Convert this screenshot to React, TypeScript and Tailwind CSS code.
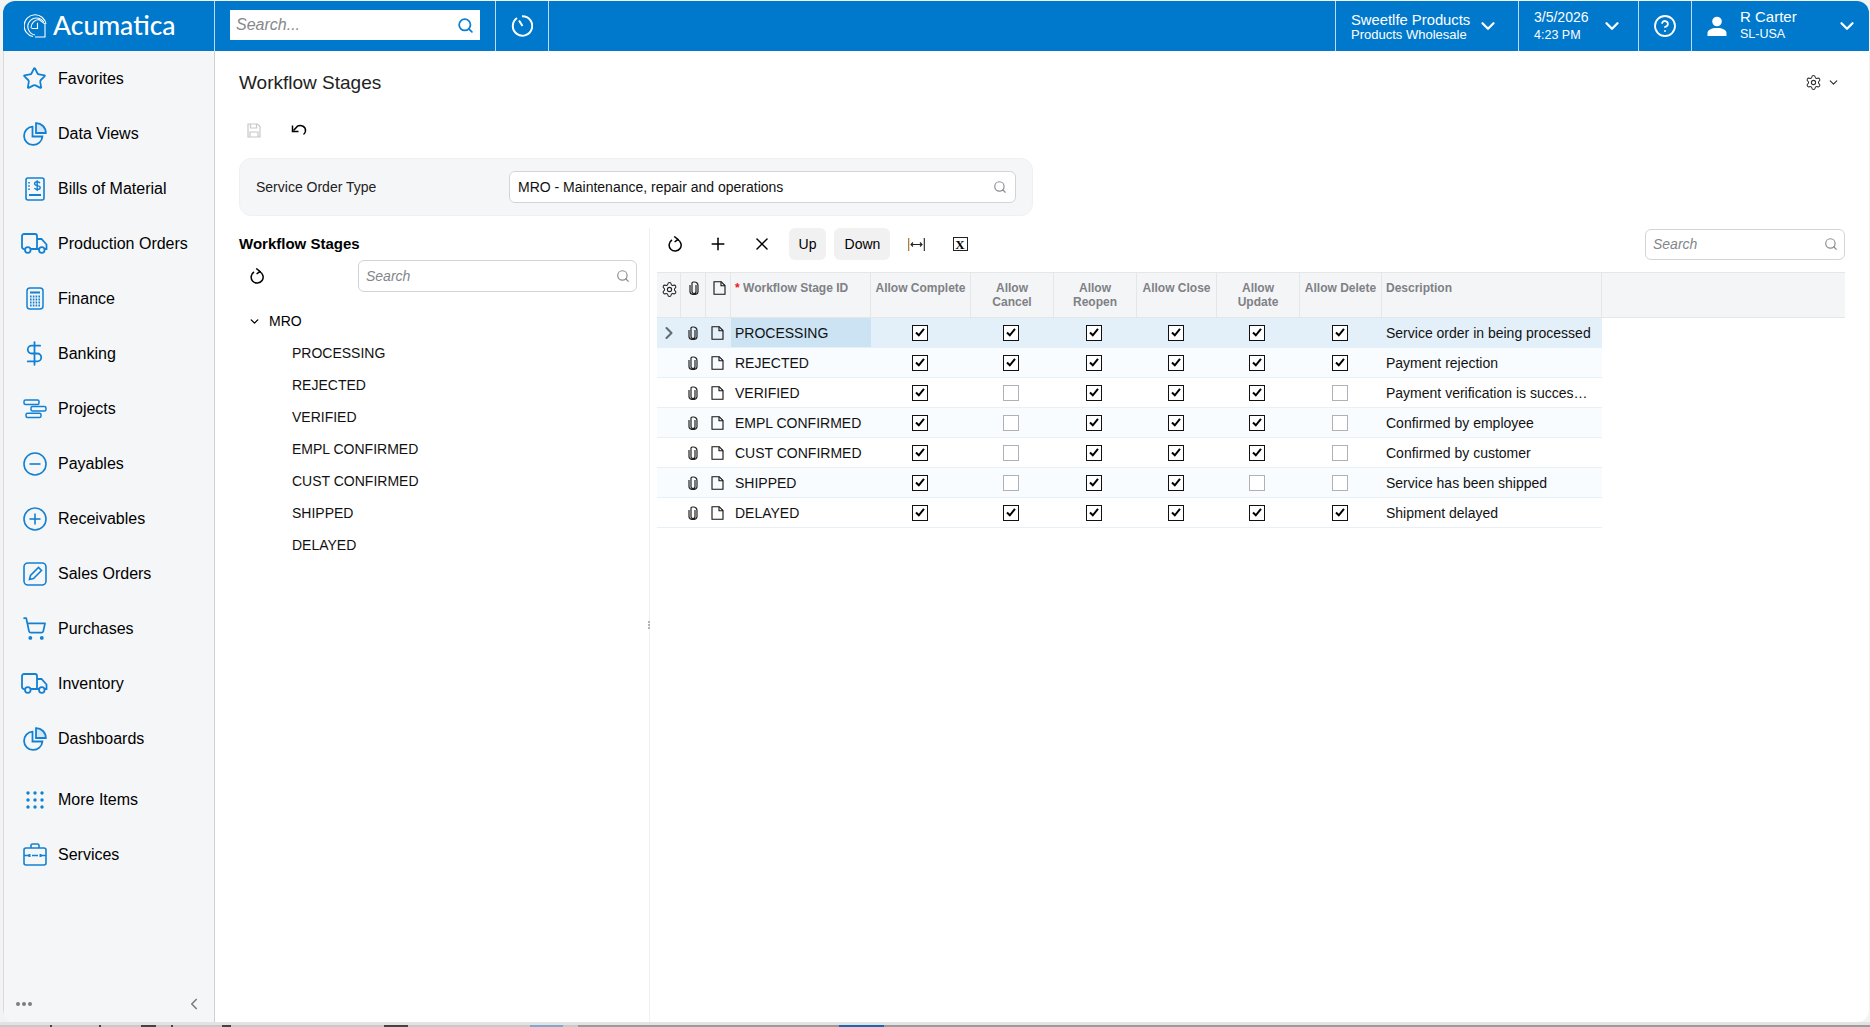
import { ChevronDown, ChevronLeft, ChevronRight, CircleHelp, Search, Settings, Star, DollarSign, ShoppingCart, Plus, X } from "lucide-react";
import type { ReactNode } from "react";

const font = { fontFamily: '"Liberation Sans", Arial, sans-serif' };

function PieIcon() {
  return (
    <svg width="24" height="24" viewBox="0 0 24 24" fill="none" stroke="currentColor" strokeWidth="1.8">
      <path d="M9.5 4.6A9.2 9.2 0 1 0 19.4 14.5H9.5Z" />
      <path d="M13 1.2A9.6 9.6 0 0 1 22.8 11H13Z" fill="#d3e6f6" />
    </svg>
  );
}

function BillIcon() {
  return (
    <svg width="20" height="24" viewBox="0 0 20 24" fill="none" stroke="currentColor" strokeWidth="1.6">
      <rect x="1" y="1" width="18" height="22" rx="2" />
      <path d="M4 5v9" strokeDasharray="1.5 1.8" />
      <path d="M15 6.2c-.6-1-1.6-1.4-2.8-1.4-1.5 0-2.6.7-2.6 1.9 0 2.6 5.6 1.2 5.6 3.9 0 1.2-1.2 1.9-2.8 1.9-1.3 0-2.4-.5-3-1.5M12.2 3.3v10.8" strokeWidth="1.4" />
      <path d="M4 18h12" strokeWidth="2" />
    </svg>
  );
}

function TruckIcon() {
  return (
    <svg width="27" height="21" viewBox="0 0 27 21" fill="none" stroke="currentColor" strokeWidth="1.8">
      <path d="M3.5 16H3a2 2 0 0 1-2-2V3a2 2 0 0 1 2-2h11a2 2 0 0 1 2 2v13H10" />
      <path d="M16 6h4.5l5 5.5V16h-2" />
      <path d="M16 16h2" />
      <circle cx="6.8" cy="17" r="2.8" />
      <circle cx="20.8" cy="17" r="2.8" />
    </svg>
  );
}

function CalcIcon() {
  return (
    <svg width="18" height="23" viewBox="0 0 18 23" fill="none" stroke="currentColor" strokeWidth="1.5">
      <rect x="1" y="1" width="16" height="21" rx="3" />
      <path d="M4 5.5h10" strokeWidth="2" />
      <path d="M4 9.5h10M4 12.5h10M4 15.5h10M4 18.5h10" strokeWidth="1.8" strokeDasharray="1.6 1.2" />
    </svg>
  );
}

function ProjectIcon() {
  return (
    <svg width="24" height="20" viewBox="0 0 24 20" fill="none" stroke="currentColor" strokeWidth="1.5">
      <rect x="1" y="1" width="15" height="4.4" rx="1.5" />
      <rect x="8" y="7.6" width="15" height="4.4" rx="1.5" />
      <rect x="3" y="14.2" width="15" height="4.4" rx="1.5" />
    </svg>
  );
}

function CircleSign({ plus }: { plus?: boolean }) {
  return (
    <svg width="24" height="24" viewBox="0 0 24 24" fill="none" stroke="currentColor" strokeWidth="1.6">
      <circle cx="12" cy="12" r="11" />
      <path d="M6.5 12h11" />
      {plus && <path d="M12 6.5v11" />}
    </svg>
  );
}

function OrderIcon() {
  return (
    <svg width="24" height="24" viewBox="0 0 24 24" fill="none" stroke="currentColor" strokeWidth="1.6">
      <rect x="1" y="1" width="22" height="22" rx="4" />
      <path d="M6.5 17.5l1-4L15.5 5.5l3 3-8 8Z" />
    </svg>
  );
}

function DotsIcon() {
  return (
    <svg width="18" height="18" viewBox="0 0 18 18" fill="currentColor">
      {[2, 9, 16].map((y) => [2, 9, 16].map((x) => <circle key={`${x}-${y}`} cx={x} cy={y} r="1.7" />))}
    </svg>
  );
}

function CaseIcon() {
  return (
    <svg width="24" height="23" viewBox="0 0 24 23" fill="none" stroke="currentColor" strokeWidth="1.6">
      <rect x="1" y="5" width="22" height="17" rx="2" />
      <path d="M8 5V2.5A1.5 1.5 0 0 1 9.5 1h5A1.5 1.5 0 0 1 16 2.5V5" />
      <path d="M1 12.5h5M9 12.5h6M18 12.5h5" />
      <path d="M6.5 11v3M17.5 11v3" strokeWidth="2" />
    </svg>
  );
}

function LogoIcon() {
  return (
    <svg width="24" height="24" viewBox="0 0 24 24" fill="none" stroke="white" strokeWidth="1.1">
      <path d="M9 22.5A11 11 0 1 1 22 10" />
      <path d="M11 21A8.6 8.6 0 1 1 19.8 8" />
      <path d="M7 14c0-5 4-8.5 8-8.5l6 4.5v13H11" />
      <path d="M7.5 14.5h6V8.8" />
    </svg>
  );
}

function HistoryIcon() {
  return (
    <svg width="22" height="22" viewBox="0 0 22 22" fill="none" stroke="white" strokeWidth="2">
      <path d="M6 3A9.7 9.7 0 1 0 11 1.3" />
      <path d="M8 5.5l3.5 5.5" />
    </svg>
  );
}

function RefreshIcon() {
  return (
    <svg width="14" height="16" viewBox="0 0 14 16" fill="none" stroke="black" strokeWidth="1.5">
      <path d="M4 4A6 6 0 1 0 9.5 3.6" />
      <path d="M6.2 0.5L10 3.4 6.6 6" />
    </svg>
  );
}

function UndoIcon() {
  return (
    <svg width="16" height="14" viewBox="0 0 16 14" fill="none" stroke="black" strokeWidth="1.5">
      <path d="M2.5 7.5L6.5 3.2C10 1.5 15 3.5 14.5 8c-.2 1.6-1 2.8-2 3.5" />
      <path d="M1.5 2.5v6h6" />
    </svg>
  );
}

function SaveIcon() {
  return (
    <svg width="14" height="15" viewBox="0 0 14 15" fill="none" stroke="#c6c8cb" strokeWidth="1.2">
      <path d="M1 1h9.5L13 3.5V14H1Z" />
      <path d="M3.5 1v4h6V1M3 14V9h8v5" />
    </svg>
  );
}

function ClipIcon() {
  return (
    <svg width="10" height="14" viewBox="0 0 10 14" fill="none" stroke="#222" strokeWidth="1.2">
      <path d="M7 4v6.5a2 2 0 0 1-4 0V3a1.5 1.5 0 0 1 1.5-2h1A3.5 3.5 0 0 1 9 4.5v6a4 3 0 0 1-8 0V4" />
    </svg>
  );
}

function FileIcon() {
  return (
    <svg width="13" height="14" viewBox="0 0 13 14" fill="none" stroke="#111" strokeWidth="1.1">
      <path d="M1 .7h7.2L12 4.5v8.8H1Z" />
      <path d="M8 .7v4h4" />
    </svg>
  );
}

function FitIcon() {
  return (
    <svg width="17" height="13" viewBox="0 0 17 13" fill="none" stroke="#222" strokeWidth="1.1">
      <path d="M.7 0v13" stroke="#a06a2a" />
      <path d="M16.3 0v13" />
      <path d="M3 6.5h11M5 4.5l-2 2 2 2M12 4.5l2 2-2 2" />
    </svg>
  );
}

function CheckBox({ on }: { on: boolean }) {
  return (
    <span
      className={`flex h-[16px] w-[16px] items-center justify-center border-[1.5px] bg-white ${on ? "border-[#111]" : "border-[#aeb1b5]"}`}
    >
      {on && (
        <svg width="12" height="11" viewBox="0 0 12 11" fill="none" stroke="#000" strokeWidth="2">
          <path d="M2 5.5l2.8 2.8L10 1.8" />
        </svg>
      )}
    </span>
  );
}

function SearchBox({ className }: { className: string }) {
  return (
    <div className={`flex items-center rounded-md border border-[#d2d4d7] bg-white pl-[7px] pr-[6px] ${className}`}>
      <input
        placeholder="Search"
        readOnly
        className="w-full min-w-0 bg-transparent text-[14px] italic outline-none placeholder:text-[#83868a]"
      />
      <Search size={14} className="shrink-0 text-[#8a8d91]" />
    </div>
  );
}

function HeadIcon({ width, children }: { width: string; children: ReactNode }) {
  return <div className={`flex ${width} justify-center border-r border-[#e4e6e8] pl-[2px] pt-[8px]`}>{children}</div>;
}

const navItems: [string, ReactNode][] = [
  ["Favorites", <Star size={25} strokeWidth={1.7} />],
  ["Data Views", <PieIcon />],
  ["Bills of Material", <BillIcon />],
  ["Production Orders", <TruckIcon />],
  ["Finance", <CalcIcon />],
  ["Banking", <DollarSign size={27} strokeWidth={1.6} />],
  ["Projects", <ProjectIcon />],
  ["Payables", <CircleSign />],
  ["Receivables", <CircleSign plus />],
  ["Sales Orders", <OrderIcon />],
  ["Purchases", <ShoppingCart size={25} strokeWidth={1.7} />],
  ["Inventory", <TruckIcon />],
  ["Dashboards", <PieIcon />],
];

const stages = ["PROCESSING", "REJECTED", "VERIFIED", "EMPL CONFIRMED", "CUST CONFIRMED", "SHIPPED", "DELAYED"];

const rows: { id: string; flags: boolean[]; desc: string }[] = [
  { id: "PROCESSING", flags: [true, true, true, true, true, true], desc: "Service order in being processed" },
  { id: "REJECTED", flags: [true, true, true, true, true, true], desc: "Payment rejection" },
  { id: "VERIFIED", flags: [true, false, true, true, true, false], desc: "Payment verification is successful" },
  { id: "EMPL CONFIRMED", flags: [true, false, true, true, true, false], desc: "Confirmed by employee" },
  { id: "CUST CONFIRMED", flags: [true, false, true, true, true, false], desc: "Confirmed by customer" },
  { id: "SHIPPED", flags: [true, false, true, true, false, false], desc: "Service has been shipped" },
  { id: "DELAYED", flags: [true, true, true, true, true, true], desc: "Shipment delayed" },
];

const headers = ["Allow Complete", "Allow Cancel", "Allow Reopen", "Allow Close", "Allow Update", "Allow Delete"];
const flagWidths = ["w-[99px]", "w-[83px]", "w-[83px]", "w-[80px]", "w-[83px]", "w-[83px]"];
const headWidths = ["w-[100px]", "w-[83px]", "w-[83px]", "w-[80px]", "w-[83px]", "w-[82px]"];
// little bits of whatever sits behind the window along the bottom edge
const slivers = ["ml-[50px] w-[2px]", "ml-[47px] w-[2px]", "ml-[40px] w-[15px]", "ml-[15px] w-[2px]", "ml-[49px] w-[9px]", "ml-[153px] w-[24px]"];

function NavRow({ label, icon }: { label: string; icon: ReactNode }) {
  return (
    <div className="flex h-[55px] items-center">
      <span className="flex w-[54px] shrink-0 items-center justify-center pl-[7px] text-[#1281d3]">{icon}</span>
      <span className="text-[16px] text-black">{label}</span>
    </div>
  );
}

function Sidebar() {
  return (
    <aside className="flex w-[212px] shrink-0 flex-col border-r border-l border-r-[#cfd1d4] border-l-[#d8dadc] bg-[#f5f6f8]">
      {navItems.map(([label, icon]) => (
        <NavRow key={label} label={label} icon={icon} />
      ))}
      <div className="mt-[6px]">
        <NavRow label="More Items" icon={<DotsIcon />} />
        <NavRow label="Services" icon={<CaseIcon />} />
      </div>
      <div className="mt-auto flex h-[36px] items-center justify-between pl-[12px] pr-[11px] text-[#7b7e82]">
        <div className="flex gap-[2px]">
          <span className="h-[4px] w-[4px] rounded-full bg-[#7b7e82]" />
          <span className="h-[4px] w-[4px] rounded-full bg-[#7b7e82]" />
          <span className="h-[4px] w-[4px] rounded-full bg-[#7b7e82]" />
        </div>
        <ChevronLeft size={18} strokeWidth={2.2} />
      </div>
    </aside>
  );
}

function TopBar() {
  return (
    <header className="flex h-[50px] shrink-0 bg-[#0079cc] text-white">
      <div className="flex w-[212px] shrink-0 items-center gap-[5px] border-r border-[#bcdcf2] pl-[21px]">
        <LogoIcon />
        <span className="pb-[2px] text-[26.5px] font-medium leading-none" style={{ fontFamily: "Lato, sans-serif" }}>
          Acumatica
        </span>
      </div>
      <div className="flex w-[281px] shrink-0 items-start border-r border-[#bcdcf2] pl-[15px] pt-[9px]">
        <div className="flex h-[30px] w-[250px] items-center bg-white pl-[6px] pr-[6px]">
          <input
            placeholder="Search..."
            readOnly
            className="w-full min-w-0 bg-transparent text-[16px] italic outline-none placeholder:text-[#85888c]"
          />
          <Search size={17} strokeWidth={2.5} className="shrink-0 text-[#0f7fd0]" />
        </div>
      </div>
      <div className="flex w-[53px] shrink-0 items-center justify-center border-r border-[#bcdcf2]">
        <HistoryIcon />
      </div>
      <div className="flex-1" />
      <div className="flex w-[183px] shrink-0 items-center border-l border-[#bcdcf2] pl-[15px]">
        <div className="w-[126px] pt-[2px] leading-none">
          <div className="text-[14.8px]">Sweetlfe Products</div>
          <div className="mt-[1px] text-[13px]">Products Wholesale</div>
        </div>
        <ChevronDown size={22} strokeWidth={2.5} />
      </div>
      <div className="flex w-[120px] shrink-0 items-center border-l border-[#bcdcf2] pl-[15px]">
        <div className="w-[67px] leading-none">
          <div className="text-[14px]">3/5/2026</div>
          <div className="mt-[5px] text-[12.5px]">4:23 PM</div>
        </div>
        <ChevronDown size={22} strokeWidth={2.5} />
      </div>
      <div className="flex w-[53px] shrink-0 items-center justify-center border-l border-[#bcdcf2]">
        <CircleHelp size={24} strokeWidth={1.8} />
      </div>
      <div className="flex w-[178px] shrink-0 items-center border-l border-[#bcdcf2] pl-[15px]">
        <svg width="20" height="20" viewBox="0 0 20 20" fill="white" className="shrink-0">
          <circle cx="10" cy="5.5" r="4.8" />
          <path d="M0.5 20v-3c0-3 4-5 9.5-5s9.5 2 9.5 5v3Z" />
        </svg>
        <div className="ml-[13px] w-[96px] pb-[3px] leading-none">
          <div className="text-[15px]">R Carter</div>
          <div className="mt-[4px] text-[12.5px]">SL-USA</div>
        </div>
        <ChevronDown size={22} strokeWidth={2.5} />
      </div>
    </header>
  );
}

function StageTree() {
  return (
    <div className="w-[435px] shrink-0 border-r border-[#eef0f2] pl-[24px] pr-[12px]">
      <div className="flex h-[32px] items-center pt-[1px] text-[15px] font-bold text-black">Workflow Stages</div>
      <div className="flex h-[32px] items-center justify-between">
        <span className="flex w-[36px] justify-center">
          <RefreshIcon />
        </span>
        <SearchBox className="h-[32px] w-[279px]" />
      </div>
      <div className="mt-[13px]">
        <div className="flex h-[32px] items-center pl-[9px] text-[14px]">
          <ChevronDown size={13} strokeWidth={2.5} />
          <span className="ml-[8px]">MRO</span>
        </div>
        {stages.map((s) => (
          <div key={s} className="flex h-[32px] items-center pl-[53px] text-[14px] text-[#111]">
            {s}
          </div>
        ))}
      </div>
    </div>
  );
}

function StageGrid() {
  return (
    <div className="relative min-w-0 flex-1 pl-[7px] pr-[24px]">
      <div className="absolute left-[-2px] top-[393px] flex flex-col gap-[1px]">
        <span className="h-[2px] w-[2px] rounded-full bg-[#9a9da1]" />
        <span className="h-[2px] w-[2px] rounded-full bg-[#9a9da1]" />
        <span className="h-[2px] w-[2px] rounded-full bg-[#9a9da1]" />
      </div>
      <div className="flex h-[32px] items-center gap-2">
        <span className="flex w-9 justify-center">
          <RefreshIcon />
        </span>
        <span className="flex w-9 justify-center pr-[2px]">
          <Plus size={20} strokeWidth={1.8} />
        </span>
        <span className="flex w-9 justify-center pr-[2px]">
          <X size={20} strokeWidth={1.8} />
        </span>
        <span className="flex h-[32px] w-[37px] items-center justify-center rounded-md bg-[#f1f1f1] text-[14px]">Up</span>
        <span className="flex h-[32px] w-[56px] items-center justify-center rounded-md bg-[#f1f1f1] pl-[1px] text-[14px]">Down</span>
        <span className="flex w-9 justify-center">
          <FitIcon />
        </span>
        <span className="flex w-9 justify-center">
          <span
            className="flex h-[14px] w-[15px] items-center justify-center border-[1.5px] border-[#222] text-[13px] font-bold leading-none"
            style={{ fontFamily: '"Liberation Serif", serif' }}
          >
            X
          </span>
        </span>
        <SearchBox className="ml-auto h-[31px] w-[200px]" />
      </div>

      <div className="mt-[12px] flex h-[46px] border-t border-b border-[#e4e6e8] bg-[#f4f5f7] text-[12px] font-bold leading-[14px] text-[#7e8185]">
        <HeadIcon width="w-[24px]">
          <Settings size={17} strokeWidth={1.5} className="text-[#222]" />
        </HeadIcon>
        <HeadIcon width="w-[25px]">
          <ClipIcon />
        </HeadIcon>
        <HeadIcon width="w-[25px]">
          <FileIcon />
        </HeadIcon>
        <div className="w-[140px] border-r border-[#e4e6e8] pl-[4px] pt-[8px]">
          <span className="text-[#f01818]">* </span>Workflow Stage ID
        </div>
        {headers.map((h, i) => (
          <div key={h} className={`${headWidths[i]} border-r border-[#e4e6e8] px-[2px] pt-[8px] text-center`}>
            <span className={i === 1 || i === 2 || i === 4 ? "mx-auto block w-[50px]" : ""}>{h}</span>
          </div>
        ))}
        <div className="w-[219.5px] border-r border-[#e4e6e8] pl-[4px] pt-[8px]">Description</div>
      </div>

      {rows.map((r, idx) => (
        <div
          key={r.id}
          className={`flex h-[30px] w-[944.5px] items-center border-b text-[14px] text-[#111] ${
            idx === 0
              ? "border-transparent bg-[#e3f0f9]"
              : idx % 2 === 1
                ? "border-[#e8f0f5] bg-[#f8fcfe]"
                : "border-[#e8f0f5] bg-white"
          }`}
        >
          <span className="flex w-[24px] justify-center text-[#5f6b75]">
            {idx === 0 && <ChevronRight size={20} strokeWidth={2.5} />}
          </span>
          <span className="flex w-[25px] justify-center pr-[2px]">
            <ClipIcon />
          </span>
          <span className="flex w-[25px] justify-center pr-[2px]">
            <FileIcon />
          </span>
          <span className={`flex h-full w-[140px] items-center pl-[4px] pt-[2px] ${idx === 0 ? "bg-[#cbe3f3]" : ""}`}>{r.id}</span>
          {r.flags.map((on, i) => (
            <span key={i} className={`flex ${flagWidths[i]} justify-center pr-[1px]`}>
              <CheckBox on={on} />
            </span>
          ))}
          <span className="w-[219.5px] truncate pl-[4px] pr-[7px] pt-[2px]">{r.desc}</span>
        </div>
      ))}
    </div>
  );
}

export default function App() {
  return (
    <div className="h-[1027px] w-[1870px] overflow-hidden bg-[#f3f3f3]" style={font}>
      <div className="ml-[3px] mt-[1px] flex h-[1021px] w-[1866px] flex-col overflow-hidden rounded-[12px] bg-white">
        <TopBar />
        <div className="flex min-h-0 flex-1">
          <Sidebar />
          <main className="flex min-w-0 flex-1 flex-col">
            <div className="flex h-[62px] shrink-0 items-center justify-between pl-[24px] pr-[29px]">
              <h1 className="pt-[2px] text-[19px] text-[#222]">Workflow Stages</h1>
              <div className="flex items-center gap-[5px] text-[#333]">
                <Settings size={17} strokeWidth={1.5} />
                <ChevronDown size={13} strokeWidth={2.2} />
              </div>
            </div>
            <div className="flex h-[34px] shrink-0 items-center pl-[32px]">
              <SaveIcon />
              <span className="ml-[30px]">
                <UndoIcon />
              </span>
            </div>
            <div className="ml-[24px] mt-[11px] flex h-[58px] w-[794px] shrink-0 items-center rounded-[12px] border border-[#eff0f2] bg-[#f5f6f8] pl-[16px]">
              <span className="w-[253px] text-[14px] text-[#222]">Service Order Type</span>
              <div className="flex h-[32px] w-[507px] items-center rounded-md border border-[#d2d4d7] bg-white pl-[8px] pr-[8px] text-[14px] text-[#111]">
                <span className="flex-1">MRO - Maintenance, repair and operations</span>
                <Search size={14} className="text-[#8a8d91]" />
              </div>
            </div>
            <div className="mt-[12px] flex min-h-0 flex-1">
              <StageTree />
              <StageGrid />
            </div>
          </main>
        </div>
      </div>
      <div className="h-[3px] bg-[#e3e3e3]" />
      <div className="flex h-[2px] bg-[#9b9b9b]">
        <div className="flex w-[578px] shrink-0 bg-[#c9c9c9]">
          {slivers.map((c) => (
            <span key={c} className={`${c} bg-[#444]`} />
          ))}
          <span className="ml-[122px] w-[33px] bg-[#7fa8cc]" />
        </div>
        <span className="ml-[261px] w-[45px] bg-[#1f66b0]" />
      </div>
    </div>
  );
}
